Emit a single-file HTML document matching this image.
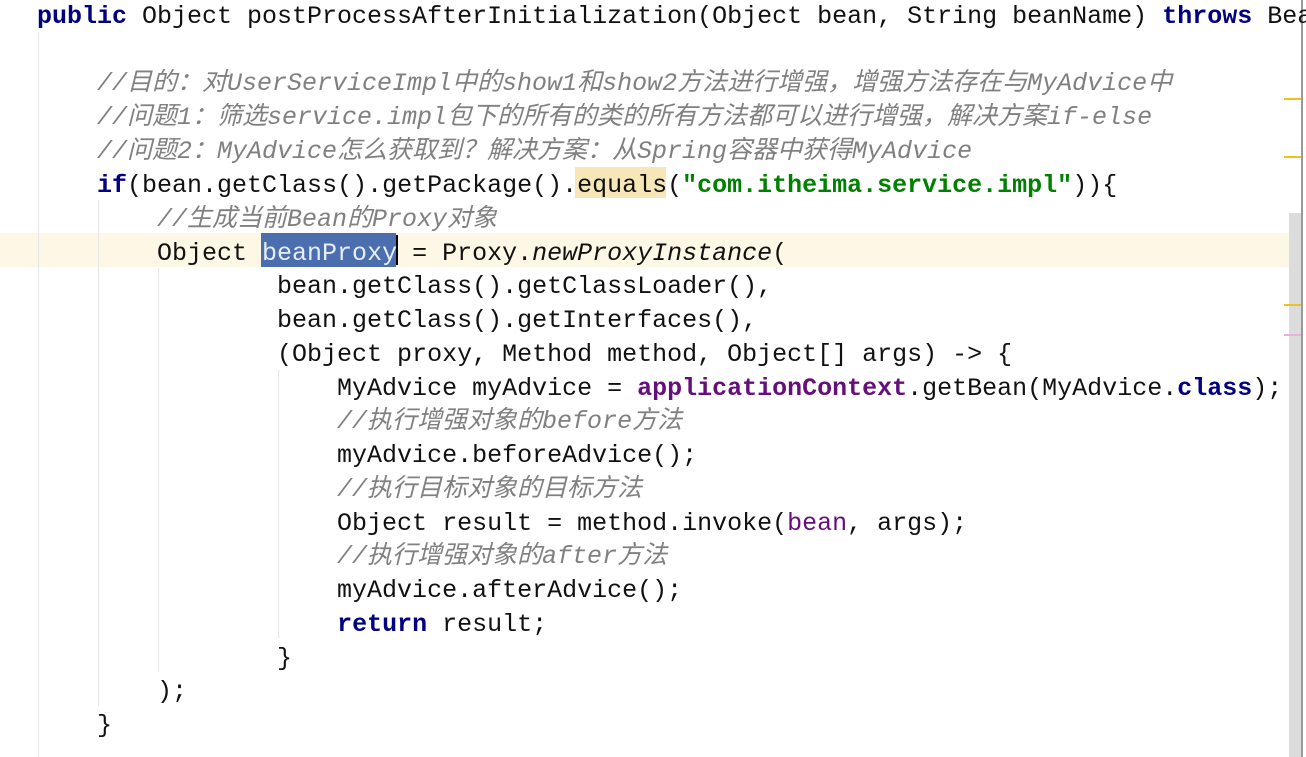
<!DOCTYPE html>
<html><head><meta charset="utf-8"><style>
body{margin:0;width:1306px;height:757px;overflow:hidden;background:#fff;position:relative}
.l{position:absolute;left:37px;height:34px;line-height:34px;font-family:"Liberation Mono","Noto Sans CJK SC",monospace;font-size:25px;color:#111;white-space:pre}
.k{color:#000080;font-weight:bold}
.s{color:#008000;font-weight:bold}
.c{color:#808080;font-style:italic}
.p{color:#660e7a;font-weight:bold}
.v{color:#660e7a}
.i{font-style:italic}
.g{position:absolute;width:1px;background:#e6e6e6}
.m{position:absolute;left:1284px;width:17px;height:2px}
</style></head><body>
<div style="position:absolute;left:0;top:233px;width:1290px;height:34px;background:#fdf8e6"></div>
<div class="g" style="left:38px;top:32px;height:725px"></div>
<div class="g" style="left:98px;top:200px;height:506px"></div>
<div class="g" style="left:158px;top:268px;height:403px"></div>
<div class="g" style="left:278px;top:370px;height:268px"></div>
<div style="position:absolute;left:1301px;top:0;width:2px;height:757px;background:#9a9a9a"></div>
<div style="position:absolute;left:1289px;top:213px;width:12px;height:544px;background:#dcdcdc"></div>
<div class="m" style="top:98px;background:#f0c020"></div>
<div class="m" style="top:156px;background:#f0c020"></div>
<div class="m" style="top:304px;background:#e8c030"></div>
<div class="m" style="top:334px;background:#e8b0e0"></div>
<div style="position:absolute;left:575px;top:167px;width:91px;height:31px;background:#f7e6b8"></div>
<div style="position:absolute;left:261px;top:233px;width:135px;height:34px;background:#4b6eaf"></div>
<div style="position:absolute;left:396px;top:235px;width:2px;height:30px;background:#000"></div>
<div class="l" style="top:0px"><span class="k">public</span> Object postProcessAfterInitialization(Object bean, String beanName) <span class="k">throws</span> Bea</div>
<div class="l c" style="top:67px">    //目的：对UserServiceImpl中的show1和show2方法进行增强，增强方法存在与MyAdvice中</div>
<div class="l c" style="top:101px">    //问题1：筛选service.impl包下的所有的类的所有方法都可以进行增强，解决方案if-else</div>
<div class="l c" style="top:135px">    //问题2：MyAdvice怎么获取到？解决方案：从Spring容器中获得MyAdvice</div>
<div class="l" style="top:169px">    <span class="k">if</span>(bean.getClass().getPackage().equals(<span class="s">"com.itheima.service.impl"</span>)){</div>
<div class="l c" style="top:203px">        //生成当前Bean的Proxy对象</div>
<div class="l" style="top:237px">        Object <span style="color:#e8eef8">beanProxy</span> = Proxy.<span class="i">newProxyInstance</span>(</div>
<div class="l" style="top:270px">                bean.getClass().getClassLoader(),</div>
<div class="l" style="top:304px">                bean.getClass().getInterfaces(),</div>
<div class="l" style="top:338px">                (Object proxy, Method method, Object[] args) -&gt; {</div>
<div class="l" style="top:372px">                    MyAdvice myAdvice = <span class="p">applicationContext</span>.getBean(MyAdvice.<span class="k">class</span>);</div>
<div class="l c" style="top:405px">                    //执行增强对象的before方法</div>
<div class="l" style="top:439px">                    myAdvice.beforeAdvice();</div>
<div class="l c" style="top:473px">                    //执行目标对象的目标方法</div>
<div class="l" style="top:507px">                    Object result = method.invoke(<span class="v">bean</span>, args);</div>
<div class="l c" style="top:540px">                    //执行增强对象的after方法</div>
<div class="l" style="top:574px">                    myAdvice.afterAdvice();</div>
<div class="l" style="top:608px">                    <span class="k">return</span> result;</div>
<div class="l" style="top:642px">                }</div>
<div class="l" style="top:675px">        );</div>
<div class="l" style="top:709px">    }</div>
</body></html>
